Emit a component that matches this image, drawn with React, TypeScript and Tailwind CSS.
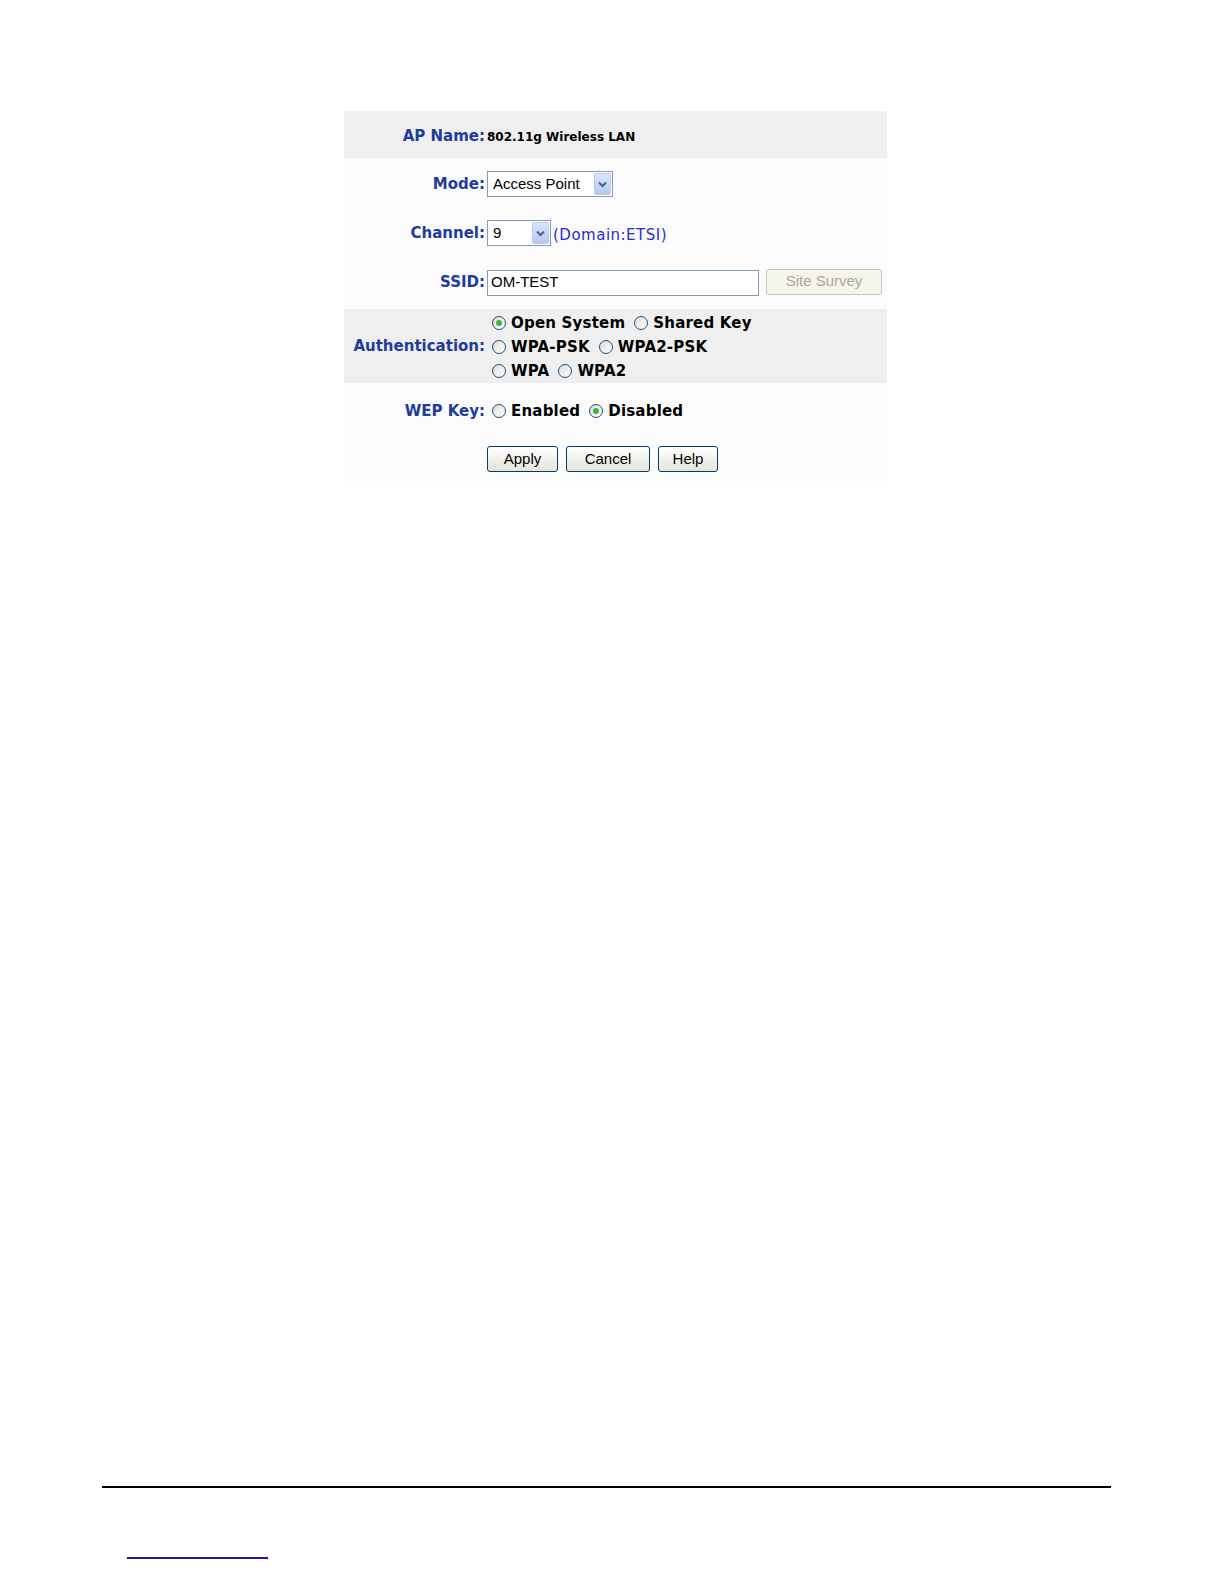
import React from "react";

const label = "text-right pr-[2px] font-bold text-[15px] text-[#1e3c9c] whitespace-nowrap";

function Radio({ checked, text }: { checked?: boolean; text: string }) {
  return (
    <span className="inline-flex items-center mr-[9px] whitespace-nowrap">
      <span className="w-[14px] h-[14px] rounded-full border border-[#1c5180] bg-gradient-to-br from-[#dcdcd6] to-white flex items-center justify-center mr-[5px]">
        {checked && <span className="w-[6px] h-[6px] rounded-full bg-[#3cb33c]" />}
      </span>
      <span className="font-bold text-[15px] text-black tracking-[0.2px]">{text}</span>
    </span>
  );
}

function Select({ value, width }: { value: string; width: string }) {
  return (
    <div className={`${width} h-[26px] border border-[#7f9db9] bg-white flex items-center justify-between pl-[5px] pr-[1px]`}>
      <span className="text-[15px] text-black font-['Liberation_Sans',Arial,sans-serif]">{value}</span>
      <span className="w-[17px] h-[22px] rounded-[2px] border border-[#b9cbf0] bg-gradient-to-b from-[#dbe5fb] to-[#b3c8f3] flex items-center justify-center">
        <svg width="9" height="7" viewBox="0 0 9 7">
          <path d="M1 1.5 L4.5 5 L8 1.5" stroke="#4d6185" strokeWidth="2" fill="none" />
        </svg>
      </span>
    </div>
  );
}

function Btn({ text, w }: { text: string; w: string }) {
  return (
    <button className={`${w} h-[26px] rounded-[3px] border border-[#003c74] bg-gradient-to-b from-white to-[#e6e3d6] text-[15px] text-black font-['Liberation_Sans',Arial,sans-serif]`}>
      {text}
    </button>
  );
}

export default function App() {
  return (
    <div className="relative w-[1224px] h-[1584px] overflow-hidden bg-white font-['DejaVu_Sans',Verdana,sans-serif]">
      <div className="pt-[111px] pl-[344px]">
        <div className="w-[543px] grid grid-cols-[143px_1fr]">
          {/* AP Name */}
          <div className={`${label} bg-[#efefef] h-[47px] pt-[4px] flex items-center justify-end`}>AP Name:</div>
          <div className="bg-[#efefef] h-[47px] pt-[4px] flex items-center font-bold text-[12px] text-black">802.11g Wireless LAN</div>

          {/* Mode */}
          <div className={`${label} bg-[#fbfbfb] h-[52px] flex items-center justify-end`}>Mode:</div>
          <div className="bg-[#fbfbfb] h-[52px] flex items-center">
            <Select value="Access Point" width="w-[126px]" />
          </div>

          {/* Channel */}
          <div className={`${label} bg-[#fbfbfb] h-[46px] flex items-center justify-end`}>Channel:</div>
          <div className="bg-[#fbfbfb] h-[46px] flex items-center">
            <Select value="9" width="w-[64px]" />
            <span className="ml-[2px] mt-[4px] text-[15px] tracking-[0.5px] text-[#2a2ae0]">(Domain:ETSI)</span>
          </div>

          {/* SSID */}
          <div className={`${label} bg-[#fbfbfb] h-[53px] flex items-center justify-end`}>SSID:</div>
          <div className="bg-[#fbfbfb] h-[53px] flex items-center">
            <div className="w-[272px] h-[26px] border border-[#7f9db9] bg-white flex items-center pl-[3px] text-[15px] font-['Liberation_Sans',Arial,sans-serif]">OM-TEST</div>
            <button className="ml-[7px] mb-[2px] w-[116px] h-[26px] rounded-[3px] border border-[#c9c7ba] bg-[#f5f4ea] text-[15px] text-[#aca899] font-['Liberation_Sans',Arial,sans-serif]">Site Survey</button>
          </div>

          {/* Authentication */}
          <div className={`${label} bg-[#efefef] h-[74px] flex items-center justify-end`}>Authentication:</div>
          <div className="bg-[#efefef] h-[74px] pt-[2px] pl-[5px] flex flex-col">
            <div className="h-[24px] flex items-center"><Radio checked text="Open System" /><Radio text="Shared Key" /></div>
            <div className="h-[24px] flex items-center"><Radio text="WPA-PSK" /><Radio text="WPA2-PSK" /></div>
            <div className="h-[24px] flex items-center"><Radio text="WPA" /><Radio text="WPA2" /></div>
          </div>

          {/* WEP Key */}
          <div className={`${label} bg-[#fbfbfb] h-[56px] flex items-center justify-end`}>WEP Key:</div>
          <div className="bg-[#fbfbfb] h-[56px] pl-[5px] flex items-center">
            <Radio text="Enabled" /><Radio checked text="Disabled" />
          </div>

          {/* Buttons */}
          <div className="bg-[#fbfbfb] h-[42px]" />
          <div className="bg-[#fbfbfb] h-[42px] pt-[7px] flex gap-[8px]">
            <Btn text="Apply" w="w-[71px]" />
            <Btn text="Cancel" w="w-[84px]" />
            <Btn text="Help" w="w-[60px]" />
          </div>
        </div>
      </div>

      <div className="mt-[1005px] ml-[102px] w-[1009px] h-[2px] bg-black" />
      <div className="mt-[69px] ml-[127px] w-[141px] h-[2px] bg-[#1a1aa0]" />
    </div>
  );
}
